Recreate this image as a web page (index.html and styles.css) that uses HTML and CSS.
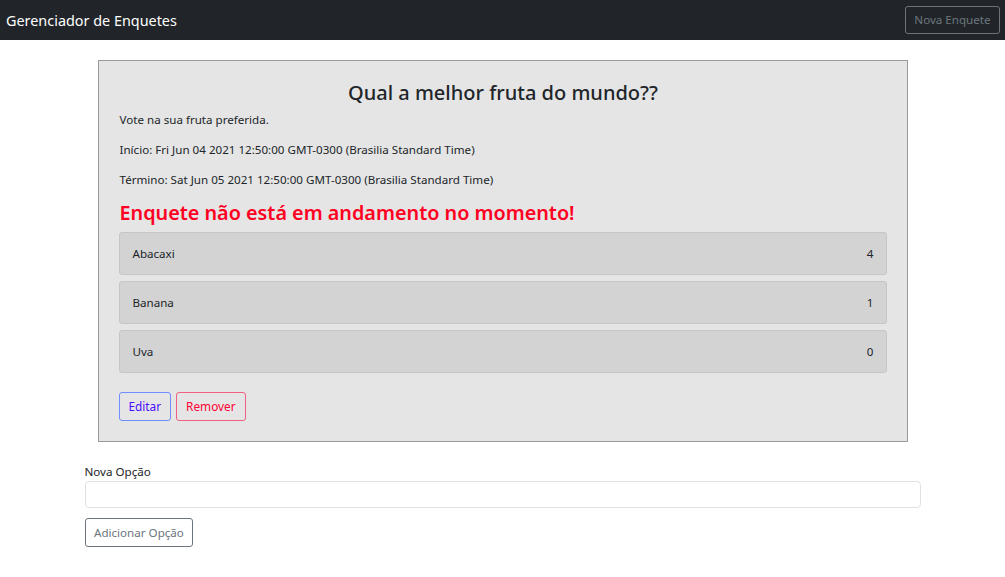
FILE: index.html
```html
<!DOCTYPE html>
<html lang="pt-BR">
<head>
<meta charset="utf-8">
<title>Gerenciador de Enquetes</title>
<link rel="stylesheet" href="styles.css">
</head>
<body>
<nav class="navbar">
  <span class="brand">Gerenciador de Enquetes</span>
  <button class="btn btn-nav">Nova Enquete</button>
</nav>
<main class="container">
  <section class="poll">
    <h2 class="poll-title">Qual a melhor fruta do mundo??</h2>
    <p class="poll-text">Vote na sua fruta preferida.</p>
    <p class="poll-text">Início: Fri Jun 04 2021 12:50:00 GMT-0300 (Brasilia Standard Time)</p>
    <p class="poll-text">Término: Sat Jun 05 2021 12:50:00 GMT-0300 (Brasilia Standard Time)</p>
    <h3 class="poll-status">Enquete não está em andamento no momento!</h3>
    <ul class="options">
      <li class="option"><span>Abacaxi</span><span>4</span></li>
      <li class="option"><span>Banana</span><span>1</span></li>
      <li class="option"><span>Uva</span><span>0</span></li>
    </ul>
    <div class="actions">
      <button class="btn btn-edit">Editar</button>
      <button class="btn btn-remove">Remover</button>
    </div>
  </section>
  <form class="new-option">
    <label class="label" for="opt">Nova Opção</label>
    <input class="input" id="opt" type="text">
    <button type="button" class="btn btn-add">Adicionar Opção</button>
  </form>
</main>
</body>
</html>
```
FILE: styles.css
```css
* { box-sizing: border-box; }
body {
  margin: 0;
  font-family: "Noto Sans", "Open Sans", sans-serif;
  font-size: 11.6px;
  color: #212529;
  background: #fff;
}
.navbar {
  height: 40px;
  background: #212529;
  display: flex;
  align-items: center;
  justify-content: space-between;
  padding: 0 5px 0 6px;
}
.brand {
  color: #fff;
  font-size: 14.4px;
}
.btn {
  font-family: inherit;
  font-size: 11.6px;
  background: transparent;
  border: 1px solid;
  border-radius: 3px;
  height: 29px;
  padding: 0 8.5px;
  cursor: pointer;
}
.btn-nav {
  color: #6c757d;
  border-color: #6c757d;
  height: 28px;
  margin-top: -1px;
}
.container {
  width: 836px;
  margin: 0 auto;
  padding-top: 20px;
}
.poll {
  margin: 0 13px;
  background: #e5e5e5;
  border: 1px solid #999;
  padding: 20px 20px 20px 21px;
}
.poll-title {
  margin: 0 0 6px;
  text-align: center;
  font-size: 20px;
  font-weight: 500;
  line-height: 1.2;
}
.poll-text {
  margin: 0 0 12px;
  line-height: 18px;
}
.poll-status {
  margin: 1px 0 7px;
  color: #ff0022;
  font-size: 19.8px;
  font-weight: 600;
  line-height: 1.2;
}
.options {
  list-style: none;
  margin: 0 0 0 -1px;
  padding: 0;
  display: flex;
  flex-direction: column;
  gap: 6px;
}
.option {
  height: 43px;
  display: flex;
  align-items: center;
  justify-content: space-between;
  padding: 0 12px 0 13px;
  background: #d3d3d3;
  border: 1px solid #c6c6c6;
  border-radius: 3px;
}
.actions {
  display: flex;
  gap: 5px;
  margin: 19px 0 0 -1px;
}
.btn-edit {
  color: #4a0dff;
  border-color: #6f8dff;
  padding: 0 9px;
  font-size: 11.8px;
}
.btn-remove {
  color: #ff0033;
  border-color: #f06080;
  padding: 0 9px;
  font-size: 11.8px;
}
.new-option {
  display: flex;
  flex-direction: column;
  align-items: flex-start;
  margin-top: 21px;
}
.label {
  line-height: 18px;
}
.input {
  width: 100%;
  height: 27px;
  border: 1px solid #dee2e6;
  border-radius: 4px;
  margin-bottom: 10px;
}
.btn-add {
  color: #6c757d;
  border-color: #6c757d;
}
```
